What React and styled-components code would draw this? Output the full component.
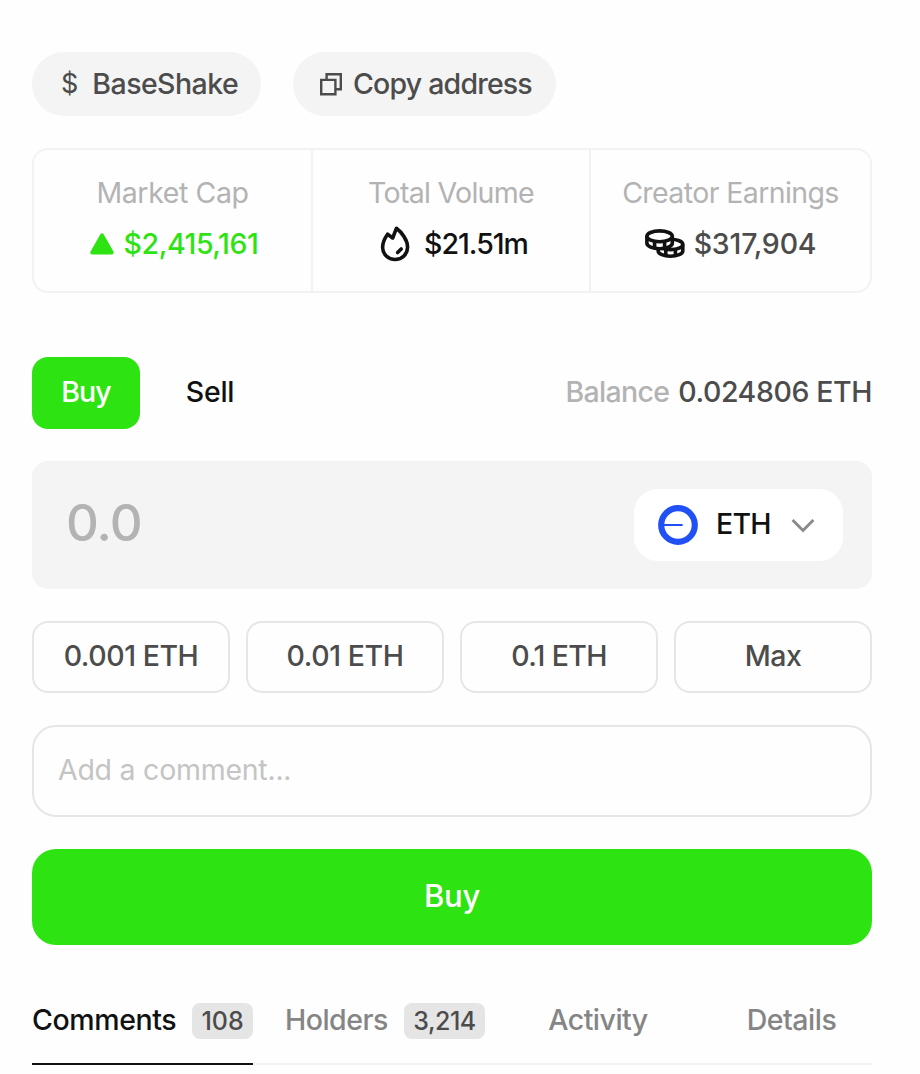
import React from "react";
import styled, { createGlobalStyle } from "styled-components";

const GlobalStyle = createGlobalStyle`
  *, *::before, *::after { box-sizing: border-box; }
  body {
    margin: 0;
    background: #fefefe;
    font-family: Inter, "Liberation Sans", sans-serif;
    color: #111;
    -webkit-font-smoothing: antialiased;
  }
  button, input { font: inherit; color: inherit; }
  svg { display: block; flex: none; }
`;

const Page = styled.main`
  width: 920px;
  height: 1074px;
  padding: 52px 48px 0 32px;
  overflow: hidden;
`;

const Text = styled.span`
  display: block;
  font-size: ${(p) => p.$size || 28.5}px;
  font-weight: ${(p) => p.$weight || 500};
  line-height: 36px;
  letter-spacing: ${(p) => p.$track || 0}px;
  color: ${(p) => p.$color || "inherit"};
  white-space: nowrap;
`;

const PillRow = styled.div`
  display: flex;
  gap: 32px;
`;

const Pill = styled.button`
  display: flex;
  align-items: center;
  width: ${(p) => p.$width}px;
  height: 64px;
  padding: 0 0 0 ${(p) => p.$inset}px;
  gap: ${(p) => p.$gap}px;
  border: 0;
  border-radius: 32px;
  background: #f4f4f4;
  color: #4c4c4c;
`;

const Stats = styled.section`
  display: grid;
  grid-template-columns: 279px 278px 1fr;
  height: 145px;
  margin-top: 32px;
  border: 2px solid #f2f2f2;
  border-radius: 16px;
`;

const Stat = styled.div`
  display: flex;
  flex-direction: column;
  align-items: center;
  padding-top: 25px;
  gap: 15px;
  border-right: ${(p) => (p.$last ? "0" : "2px solid #f2f2f2")};
`;

const StatValue = styled.div`
  display: flex;
  align-items: center;
  height: 36px;
  padding-left: ${(p) => p.$inset || 0}px;
  gap: ${(p) => p.$gap}px;
  color: ${(p) => p.$color};
`;

const TradeHeader = styled.div`
  display: flex;
  align-items: center;
  height: 72px;
  margin-top: 64px;
`;

const SideButton = styled.button`
  display: flex;
  align-items: center;
  justify-content: center;
  width: ${(p) => (p.$active ? 108 : 140)}px;
  height: 72px;
  padding: 0 0 2px;
  border: 0;
  border-radius: 16px;
  background: ${(p) => (p.$active ? "#2ee312" : "transparent")};
  color: ${(p) => (p.$active ? "#fff" : "#111")};
`;

const Balance = styled.div`
  display: flex;
  gap: 9px;
  margin-left: auto;
  padding-bottom: 2px;
`;

const AmountBox = styled.div`
  display: flex;
  align-items: center;
  justify-content: space-between;
  height: 128px;
  margin-top: 32px;
  padding: 0 29px 0 34px;
  border-radius: 16px;
  background: #f4f4f4;
`;

const Amount = styled(Text)`
  padding-bottom: 5px;
`;

const TokenSelect = styled.button`
  display: flex;
  align-items: center;
  width: 209px;
  height: 72px;
  padding: 0 0 0 24px;
  border: 0;
  border-radius: 24px;
  background: #fff;
`;

const TokenName = styled(Text)`
  width: 75px;
  margin-left: 18px;
  padding-bottom: 2px;
  text-align: left;
`;

const Presets = styled.div`
  display: grid;
  grid-template-columns: repeat(4, 1fr);
  gap: 16px;
  margin-top: 32px;
`;

const Preset = styled.button`
  display: flex;
  align-items: center;
  justify-content: center;
  height: 72px;
  padding: 0 0 2px;
  border: 2px solid #e6e6e6;
  border-radius: 16px;
  background: transparent;
  color: #4c4c4c;
`;

const CommentBox = styled.div`
  display: flex;
  align-items: center;
  height: 92px;
  margin-top: 32px;
  padding: 0 24px 2px;
  border: 2px solid #e6e6e6;
  border-radius: 24px;
`;

const Submit = styled.button`
  display: flex;
  align-items: center;
  justify-content: center;
  width: 100%;
  height: 96px;
  margin-top: 32px;
  padding: 0 0 2px;
  border: 0;
  border-radius: 24px;
  background: #2ee312;
  color: #fff;
`;

const Tabs = styled.nav`
  display: flex;
  height: 88px;
  margin-top: 32px;
  border-bottom: 2px solid #f2f2f2;
`;

const Tab = styled.button`
  display: flex;
  align-items: center;
  justify-content: ${(p) => (p.$centered ? "center" : "space-between")};
  width: ${(p) => p.$width}px;
  height: 88px;
  margin-right: ${(p) => p.$after || 0}px;
  padding: 0;
  border: 0;
  border-bottom: 2px solid ${(p) => (p.$active ? "#111" : "transparent")};
  background: transparent;
  color: ${(p) => (p.$active ? "#111" : "#858585")};
`;

const Badge = styled.span`
  display: flex;
  align-items: center;
  justify-content: center;
  width: ${(p) => p.$width}px;
  height: 36px;
  margin-top: 2px;
  padding-bottom: 1px;
  border-radius: 8px;
  background: #e5e5e5;
  color: #4c4c4c;
`;

const CopyIcon = () => (
  <svg width="23" height="23" viewBox="0 0 23 23" fill="none" stroke="currentColor" strokeWidth="2.4">
    <path d="M1.2 6.9h14.2v14.4H1.2z" />
    <path d="M6.6 6.9V1.3h14.2v15h-5.4" />
  </svg>
);

const UpIcon = () => (
  <svg width="24" height="22" viewBox="0 0 24 22" fill="currentColor" stroke="currentColor" strokeWidth="4" strokeLinejoin="round">
    <path d="M12 2.4 2.3 19.6h19.4z" />
  </svg>
);

const FlameIcon = () => (
  <svg width="30" height="36" viewBox="0 0 30 36" fill="none" stroke="#111" strokeWidth="3.6" strokeLinecap="round" strokeLinejoin="round">
    <path d="M16.4 2.3 12.7 12 7.6 8.2C5 11.7 2.6 16.5 2.6 21.3a12.5 12.2 0 0 0 25 0C27.6 13.7 21.6 6.2 16.4 2.3Z" />
    <path d="m17.6 26.6 3.6-3.6" />
  </svg>
);

const CoinsIcon = () => (
  <svg width="40" height="30" viewBox="0 0 40 30" fill="#fefefe" stroke="#111" strokeWidth="3.6">
    <path d="M13.2 15.4V22a12.2 5.2 0 0 0 24.6 0v-6.6" />
    <path d="M20.8 20v7M30.4 20v7" />
    <ellipse cx="25.5" cy="15.4" rx="12.3" ry="5.2" />
    <path d="M1.9 7.3v7a12.7 5.4 0 0 0 25.4 0v-7" />
    <path d="M9.6 12v7.5M19.6 12v7.5" />
    <ellipse cx="14.6" cy="7.3" rx="12.7" ry="5.4" />
  </svg>
);

const BaseIcon = () => (
  <svg width="40" height="40" viewBox="0 0 40 40" fill="none" stroke="#2151f5">
    <circle cx="20" cy="20" r="16.8" strokeWidth="6.2" />
    <path d="M5 20h19.7" strokeWidth="2" />
  </svg>
);

const ChevronIcon = () => (
  <svg width="24" height="16" viewBox="0 0 24 16" fill="none" stroke="#8a8a8a" strokeWidth="2.9">
    <path d="m1.6 2.9 10.4 10.6L22.4 2.9" />
  </svg>
);

export default function App() {
  return (
    <>
      <GlobalStyle />
      <Page>
        <PillRow>
          <Pill $width={229} $inset={29} $gap={14}>
            <Text $size={27} $weight={400}>$</Text>
            <Text $track={-0.55}>BaseShake</Text>
          </Pill>
          <Pill $width={263} $inset={27} $gap={10}>
            <CopyIcon />
            <Text $track={-0.8}>Copy address</Text>
          </Pill>
        </PillRow>

        <Stats>
          <Stat>
            <Text $weight={400} $track={-0.4} $color="#b3b3b3">Market Cap</Text>
            <StatValue $gap={9} $inset={4} $color="#2ee312">
              <UpIcon />
              <Text $track={-0.4}>$2,415,161</Text>
            </StatValue>
          </Stat>
          <Stat>
            <Text $weight={400} $track={-0.7} $color="#b3b3b3">Total Volume</Text>
            <StatValue $gap={14} $inset={6} $color="#111">
              <FlameIcon />
              <Text $track={-1}>$21.51m</Text>
            </StatValue>
          </Stat>
          <Stat $last>
            <Text $weight={400} $track={-0.6} $color="#b3b3b3">Creator Earnings</Text>
            <StatValue $gap={9} $color="#4c4c4c">
              <CoinsIcon />
              <Text $track={-0.2}>$317,904</Text>
            </StatValue>
          </Stat>
        </Stats>

        <TradeHeader>
          <SideButton $active><Text $track={-1}>Buy</Text></SideButton>
          <SideButton><Text $track={-0.3}>Sell</Text></SideButton>
          <Balance>
            <Text $color="#b3b3b3" $track={-0.7}>Balance</Text>
            <Text $color="#4c4c4c" $track={-0.4}>0.024806 ETH</Text>
          </Balance>
        </TradeHeader>

        <AmountBox>
          <Amount $size={51} $track={-1} $color="#b3b3b3">0.0</Amount>
          <TokenSelect>
            <BaseIcon />
            <TokenName $track={-0.8}>ETH</TokenName>
            <ChevronIcon />
          </TokenSelect>
        </AmountBox>

        <Presets>
          <Preset><Text $track={-0.45}>0.001 ETH</Text></Preset>
          <Preset><Text $track={-0.4}>0.01 ETH</Text></Preset>
          <Preset><Text $track={-0.65}>0.1 ETH</Text></Preset>
          <Preset><Text $track={-0.5}>Max</Text></Preset>
        </Presets>

        <CommentBox>
          <Text $weight={400} $track={-0.25} $color="#c4c4c4">Add a comment...</Text>
        </CommentBox>

        <Submit><Text $size={31} $track={-0.3}>Buy</Text></Submit>

        <Tabs>
          <Tab $active $width={221} $after={32}>
            <Text $track={-0.4}>Comments</Text>
            <Badge $width={61}><Text $size={25}>108</Text></Badge>
          </Tab>
          <Tab $width={200}>
            <Text $track={-0.5}>Holders</Text>
            <Badge $width={81}><Text $size={25} $track={-0.5}>3,214</Text></Badge>
          </Tab>
          <Tab $centered $width={226}><Text $track={-0.5}>Activity</Text></Tab>
          <Tab $centered $width={161}><Text $track={-0.5}>Details</Text></Tab>
        </Tabs>
      </Page>
    </>
  );
}
